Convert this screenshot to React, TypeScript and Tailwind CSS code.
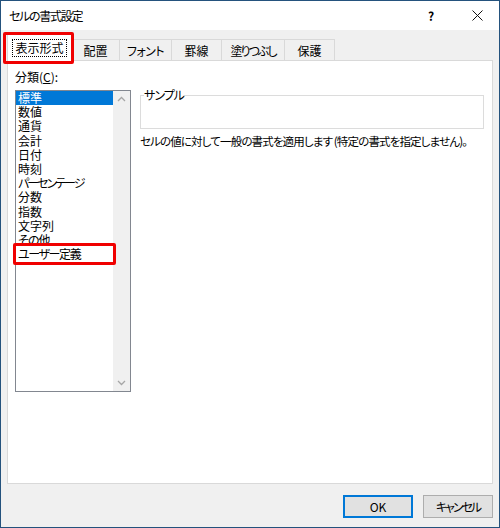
const font = "font-['Meiryo_UI','Noto_Sans_CJK_JP',sans-serif] [font-feature-settings:'palt']";

const tabs = [
  { label: "配置", w: "w-[48px]", t: "" },
  { label: "フォント", w: "w-[52px]", t: "tracking-[-0.5px]" },
  { label: "罫線", w: "w-[50px]", t: "" },
  { label: "塗りつぶし", w: "w-[63px]", t: "tracking-[-2px]" },
  { label: "保護", w: "w-[50px]", t: "" },
];

const categories = [
  { label: "標準", t: "" },
  { label: "数値", t: "" },
  { label: "通貨", t: "" },
  { label: "会計", t: "" },
  { label: "日付", t: "" },
  { label: "時刻", t: "" },
  { label: "パーセンテージ", t: "tracking-[-2px]" },
  { label: "分数", t: "" },
  { label: "指数", t: "" },
  { label: "文字列", t: "" },
  { label: "その他", t: "tracking-[-1px]" },
  { label: "ユーザー定義", t: "tracking-[-1.4px]" },
];

function Chevron({ up }: { up?: boolean }) {
  return (
    <svg width="9" height="6" viewBox="0 0 9 6" className="text-[#a6a6a6]">
      <path
        d={up ? "M1 5 L4.5 1.5 L8 5" : "M1 1 L4.5 4.5 L8 1"}
        fill="none"
        stroke="currentColor"
        strokeWidth="1.3"
      />
    </svg>
  );
}

export default function App() {
  return (
    <div
      className={`relative w-[500px] h-[528px] border border-[#24527d] bg-[#f0f0f0] flex flex-col text-[12px] text-black ${font}`}
    >
      {/* Title bar */}
      <div className="h-[29px] bg-white flex items-center pl-[8px]">
        <span className="flex-1 tracking-[-1.3px]">セルの書式設定</span>
        <span className="w-[14px] font-bold text-[12px] mr-[30px]">?</span>
        <svg width="11" height="11" viewBox="0 0 11 11" className="mr-[16px]">
          <path d="M0.5 0.5 L10.5 10.5 M10.5 0.5 L0.5 10.5" stroke="#111" strokeWidth="1" />
        </svg>
      </div>

      <div className="px-[6px] pt-[4px]">
        {/* Tabs */}
        <div className="flex items-end h-[27px]">
          <div className="w-[65px] h-[27px] bg-white border border-b-0 border-[#d9d9d9] flex items-center justify-center relative z-10">
            <span className="border border-dotted border-black px-[2px] leading-[16px]">表示形式</span>
          </div>
          {tabs.map((t) => (
            <div
              key={t.label}
              className={`${t.w} h-[22px] border-t border-r border-[#d9d9d9] flex items-center justify-center`}
            >
              <span className={t.t}>{t.label}</span>
            </div>
          ))}
        </div>

        {/* Panel */}
        <div className="-mt-px h-[424px] bg-white border border-[#d9d9d9] flex pl-[7px] pt-[8px]">
          <div className="flex flex-col w-[116px]">
            <div className="leading-[16px]">
              分類(<span className="underline">C</span>):
            </div>
            <div className="mt-[5px] h-[302px] border border-[#828790] flex">
              <div className="flex-1 flex flex-col">
                {categories.map((c, i) => (
                  <div
                    key={c.label}
                    className={`h-[14.2px] leading-[14px] pl-[2px] whitespace-nowrap ${
                      i === 0 ? "bg-[#0078d7] text-white" : ""
                    }`}
                  >
                    <span className={c.t}>{c.label}</span>
                  </div>
                ))}
              </div>
              <div className="w-[17px] bg-[#f0f0f0] flex flex-col items-center justify-between py-[5px]">
                <Chevron up />
                <Chevron />
              </div>
            </div>
          </div>

          <div className="ml-[9px] w-[344px] flex flex-col">
            <fieldset className="mt-[19px] h-[41px] border border-[#dcdcdc] px-[2px]">
              <legend className="ml-[1px] leading-[14px] tracking-[-1px]">サンプル</legend>
            </fieldset>
            <div className="mt-[5px] leading-[14px] whitespace-nowrap text-[11.5px] tracking-[-0.85px]">
              セルの値に対して一般の書式を適用します (特定の書式を指定しません)。
            </div>
          </div>
        </div>
      </div>

      {/* Buttons */}
      <div className="flex justify-end gap-[10px] pr-[6px] mt-[11px]">
        <button className="w-[70px] h-[23px] bg-[#e1e1e1] border-2 border-[#0078d7] flex items-center justify-center">
          OK
        </button>
        <button className="w-[70px] h-[23px] bg-[#e1e1e1] border border-[#adadad] flex items-center justify-center tracking-[-2px]">
          キャンセル
        </button>
      </div>

      {/* Red annotation boxes */}
      <div className="absolute left-[2px] top-[31px] w-[71px] h-[32px] border-[3px] border-[#f00000] rounded-[2px] z-20" />
      <div className="absolute left-[12px] top-[242px] w-[103px] h-[22px] border-[3px] border-[#f00000] rounded-[2px] z-20" />
    </div>
  );
}
